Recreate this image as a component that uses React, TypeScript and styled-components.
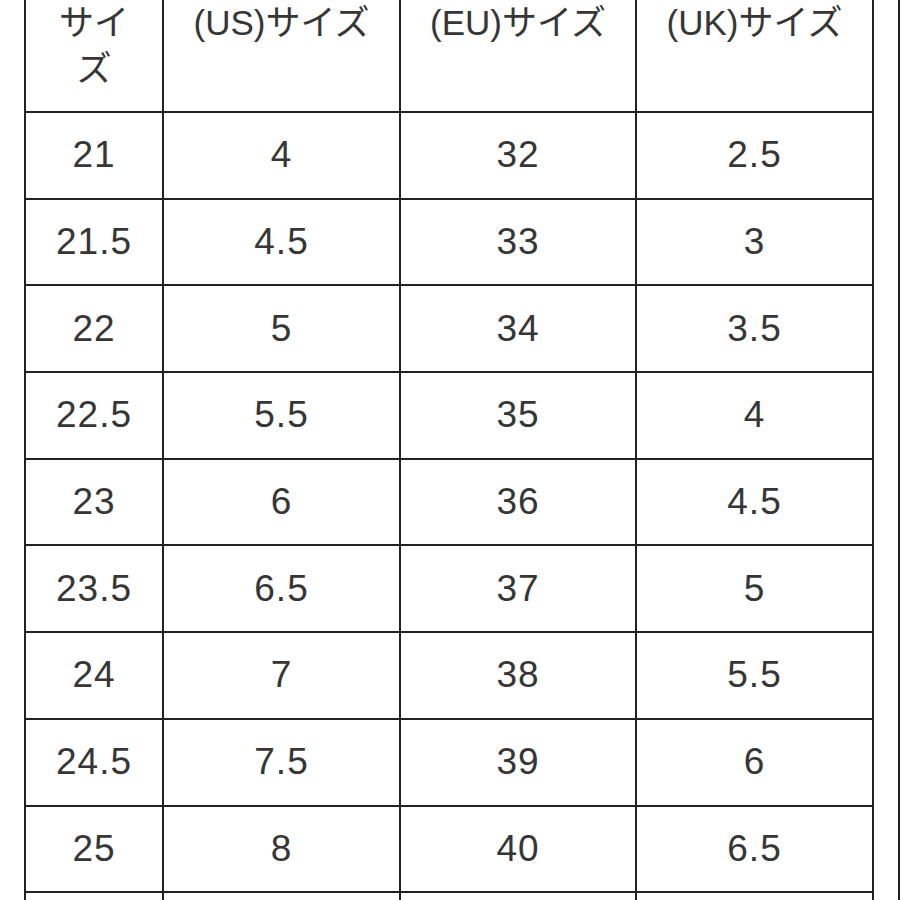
import styled, { createGlobalStyle } from 'styled-components';

const GlobalStyle = createGlobalStyle`
  html, body {
    margin: 0;
    padding: 0;
    background: #ffffff;
  }
  body {
    width: 900px;
    height: 900px;
    overflow: hidden;
  }
`;

interface SizeRow {
  jp: string;
  us: string;
  eu: string;
  uk: string;
}

const rows: SizeRow[] = [
  { jp: '21', us: '4', eu: '32', uk: '2.5' },
  { jp: '21.5', us: '4.5', eu: '33', uk: '3' },
  { jp: '22', us: '5', eu: '34', uk: '3.5' },
  { jp: '22.5', us: '5.5', eu: '35', uk: '4' },
  { jp: '23', us: '6', eu: '36', uk: '4.5' },
  { jp: '23.5', us: '6.5', eu: '37', uk: '5' },
  { jp: '24', us: '7', eu: '38', uk: '5.5' },
  { jp: '24.5', us: '7.5', eu: '39', uk: '6' },
  { jp: '25', us: '8', eu: '40', uk: '6.5' },
];

const App = () => {
  return (
    <Page>
      <GlobalStyle />
      <SizeTable>
        <colgroup>
          <Col width={138} />
          <Col width={237} />
          <Col width={236} />
          <Col width={237} />
        </colgroup>
        <thead>
          <tr>
            <HeadCell>サイズ</HeadCell>
            <HeadCell>(US)サイズ</HeadCell>
            <HeadCell>(EU)サイズ</HeadCell>
            <HeadCell>(UK)サイズ</HeadCell>
          </tr>
        </thead>
        <tbody>
          {rows.map((r) => (
            <Row key={r.jp}>
              <Cell>{r.jp}</Cell>
              <Cell>{r.us}</Cell>
              <Cell>{r.eu}</Cell>
              <Cell>{r.uk}</Cell>
            </Row>
          ))}
          {/* next row only starts at the bottom edge, its text is below the fold */}
          <Row>
            <Cell />
            <Cell />
            <Cell />
            <Cell />
          </Row>
        </tbody>
      </SizeTable>
    </Page>
  );
};

const Page = styled.div`
  width: 900px;
  height: 900px;
  box-sizing: border-box;
  padding-left: 24px;
  border-right: 2px solid #1e1e1e;
  overflow: hidden;
`;

const SizeTable = styled.table`
  margin-top: -15px;
  border-collapse: collapse;
  table-layout: fixed;
  width: 848px;
  font-family: "Liberation Sans", "Noto Sans CJK JP", sans-serif;
  font-size: 37px;
  color: #363636;
`;

const Col = styled.col<{ width: number }>`
  width: ${(p) => p.width}px;
`;

const HeadCell = styled.th`
  border: 2px solid #222222;
  padding: 13px 22px 19px;
  height: 92px;
  box-sizing: content-box;
  line-height: 46px;
  font-weight: normal;
  vertical-align: top;
  text-align: center;
  font-size: 35px;
`;

const Row = styled.tr`
  height: 86.7px;
`;

const Cell = styled.td`
  border: 2px solid #222222;
  padding: 0 10px;
  text-align: center;
  vertical-align: middle;
  letter-spacing: 1px;
`;

export default App;
